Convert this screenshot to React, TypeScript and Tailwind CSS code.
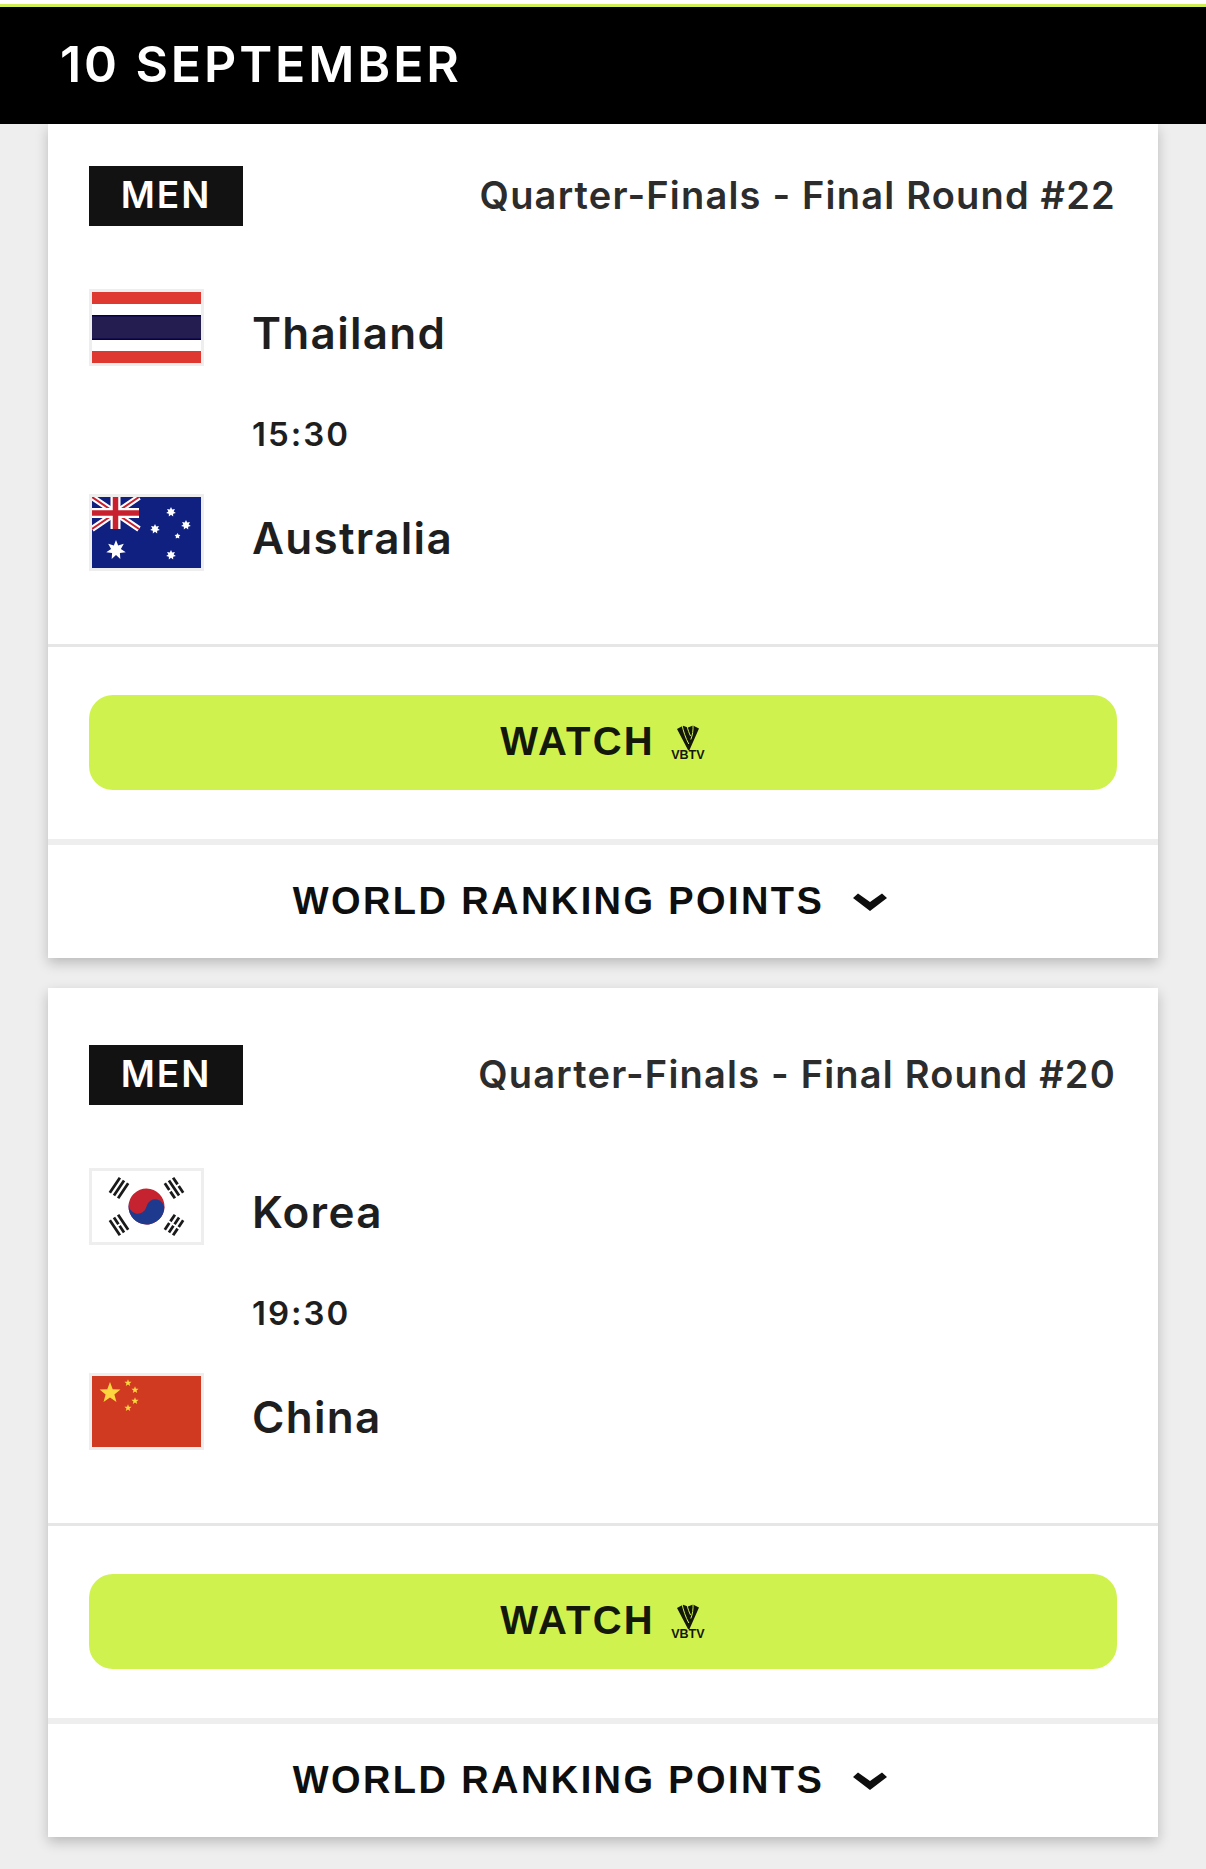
import React from "react";

const FrameFlag = ({ children }: { children: React.ReactNode }) => (
  <div className="w-[115px] h-[77px] shrink-0 border-[3px] border-[#eeeeee] bg-white">
    <svg viewBox="0 0 109 71" width="109" height="71" className="block">{children}</svg>
  </div>
);

const star = (cx: number, cy: number, r: number, points = 5, inner = 0.42) => {
  const pts: string[] = [];
  for (let i = 0; i < points * 2; i++) {
    const a = -Math.PI / 2 + (i * Math.PI) / points;
    const rr = i % 2 === 0 ? r : r * inner;
    pts.push(`${(cx + rr * Math.cos(a)).toFixed(2)},${(cy + rr * Math.sin(a)).toFixed(2)}`);
  }
  return pts.join(" ");
};

const Thailand = () => (
  <FrameFlag>
    <rect width="109" height="71" fill="#fff" />
    <rect y="0" width="109" height="12" fill="#de3831" />
    <rect y="59" width="109" height="12" fill="#de3831" />
    <rect y="23" width="109" height="25" fill="#241d4f" />
    <rect y="23" width="109" height="1.5" fill="#05004a" />
    <rect y="46.5" width="109" height="1.5" fill="#05004a" />
  </FrameFlag>
);

const Australia = () => (
  <FrameFlag>
    <rect width="109" height="71" fill="#0f2080" />
    <path d="M0 0L47 32M47 0L0 32" stroke="#fff" strokeWidth="6" />
    <path d="M0 0L47 32M47 0L0 32" stroke="#c8202f" strokeWidth="2" />
    <path d="M23.5 0V32M0 16H47" stroke="#fff" strokeWidth="10" />
    <path d="M23.5 0V32M0 16H47" stroke="#c8202f" strokeWidth="5.5" />
    <polygon points={star(24, 53, 10, 7, 0.5)} fill="#fff" />
    <polygon points={star(79, 15, 5, 7, 0.55)} fill="#fff" />
    <polygon points={star(63, 32, 5, 7, 0.55)} fill="#fff" />
    <polygon points={star(94, 28, 5, 7, 0.55)} fill="#fff" />
    <polygon points={star(85.5, 39, 3, 5, 0.55)} fill="#fff" />
    <polygon points={star(79, 58, 5, 7, 0.55)} fill="#fff" />
  </FrameFlag>
);

const Korea = () => (
  <FrameFlag>
    <rect width="109" height="71" fill="#fff" />
    <g stroke="#1a1a1a" strokeWidth="2.8" fill="none">
      <g transform="translate(27 17) rotate(-56)">
        <path d="M-9 -5H9M-9 0H9M-9 5H9" />
      </g>
      <g transform="translate(82 17) rotate(56)">
        <path d="M-9 -5H-1M1 -5H9M-9 0H9M-9 5H-1M1 5H9" />
      </g>
      <g transform="translate(27 54) rotate(56)">
        <path d="M-9 -5H9M-9 0H-1M1 0H9M-9 5H9" />
      </g>
      <g transform="translate(82 54) rotate(-56)">
        <path d="M-9 -5H-1M1 -5H9M-9 0H-1M1 0H9M-9 5H-1M1 5H9" />
      </g>
    </g>
    <g transform="rotate(12 54.5 35.5)">
      <circle cx="54.5" cy="35.5" r="18" fill="#c5232f" />
      <path d="M36.5 35.5A18 18 0 0 0 72.5 35.5A9 9 0 0 0 54.5 35.5A9 9 0 0 1 36.5 35.5Z" fill="#1d3a8f" />
    </g>
  </FrameFlag>
);

const China = () => (
  <FrameFlag>
    <rect width="109" height="71" fill="#cf3a20" />
    <polygon points={star(18, 17, 11)} fill="#fcd53f" />
    <polygon points={star(36, 7, 3.8)} fill="#fcd53f" />
    <polygon points={star(43, 14, 3.8)} fill="#fcd53f" />
    <polygon points={star(43, 25, 3.8)} fill="#fcd53f" />
    <polygon points={star(36, 32, 3.8)} fill="#fcd53f" />
  </FrameFlag>
);

const Vbtv = () => (
  <div className="flex flex-col items-center w-[36px] ml-[15px]">
    <svg viewBox="0 0 22 25" width="24" height="25" className="block">
      <path d="M0 4L6 0.8L11 2.5L16 0.5L22 3.5L12.5 25L11 25Z" fill="#14180a" />
      <path d="M5 0C6.5 6.5 8.5 13 11.8 19" fill="none" stroke="#cff24f" strokeWidth="1" />
      <path d="M10 1C11 5 12.2 8.5 13.6 11" fill="none" stroke="#cff24f" strokeWidth="1" />
      <path d="M16 0C16.3 5 15.6 10 13.8 14.5" fill="none" stroke="#cff24f" strokeWidth="1" />
    </svg>
    <span className="text-[12.5px] leading-[11px] font-bold text-[#14180a] font-['Liberation_Sans',sans-serif]">VBTV</span>
  </div>
);

const Chevron = () => (
  <svg viewBox="0 0 34 21" width="34" height="21" className="block ml-[29px] mt-[3px]">
    <polygon points="0,6 5,1.5 17,10 29,1.5 34,6 17,19" fill="#0e0e0e" />
  </svg>
);

type CardProps = {
  first?: boolean;
  round: string;
  time: string;
  teamA: string;
  teamB: string;
  flagA: React.ReactNode;
  flagB: React.ReactNode;
};

const Team = ({ flag, name }: { flag: React.ReactNode; name: string }) => (
  <div className="flex items-center gap-[48px]">
    {flag}
    <span className="text-[44px] leading-[52px] pt-[10px] font-semibold tracking-[1.3px] text-[#1e1e1e]">{name}</span>
  </div>
);

const Card = ({ first, round, time, teamA, teamB, flagA, flagB }: CardProps) => (
  <section className="bg-white shadow-[0_5px_12px_rgba(0,0,0,0.22)]">
    <div className={first ? "px-[41px] pt-[42px]" : "px-[41px] pt-[57px]"}>
      <div className="flex items-center justify-between h-[60px]">
        <span className="w-[154px] h-[60px] bg-[#121212] text-white flex items-center justify-center text-[37px] font-semibold tracking-[2px] pb-[2px]">MEN</span>
        <span className="text-[38px] font-semibold tracking-[1.2px] text-[#2c2c2c] pr-[1px] pb-[2px]">{round}</span>
      </div>
      <div className="mt-[63px]">
        <Team flag={flagA} name={teamA} />
        <div className="h-[128px] flex items-center pl-[163px] pt-[9px] text-[33px] font-semibold tracking-[2px] text-[#1e1e1e]">{time}</div>
        <Team flag={flagB} name={teamB} />
      </div>
    </div>
    <div className="mt-[73px] h-[3px] bg-[#e6e6e6]" />
    <div className="px-[41px] pt-[48px] pb-[49px]">
      <div className="h-[95px] rounded-[24px] bg-[#cff24f] flex items-center justify-center">
        <span className="text-[40px] font-bold tracking-[2.2px] text-[#14180a] font-['Liberation_Sans',sans-serif] pb-[3px]">WATCH</span>
        <Vbtv />
      </div>
    </div>
    <div className="h-[6px] bg-[#eeeeee]" />
    <div className="h-[113px] flex items-center justify-center pr-[26px] pb-[1px]">
      <span className="text-[38px] font-bold tracking-[2.4px] text-[#0e0e0e] font-['Liberation_Sans',sans-serif]">WORLD RANKING POINTS</span>
      <Chevron />
    </div>
  </section>
);

export default function App() {
  return (
    <div className="w-[1206px] h-[1869px] bg-[#eeeeee] overflow-hidden font-['Inter',sans-serif]">
      <div className="h-[4px] bg-white" />
      <div className="h-[3px] bg-[#cfee55]" />
      <header className="h-[117px] bg-black flex items-center pl-[60px] pb-[2px] relative z-10">
        <h1 className="text-[50px] font-semibold tracking-[2.9px] text-white">10 SEPTEMBER</h1>
      </header>
      <main className="px-[48px] flex flex-col gap-[30px]">
        <Card first round="Quarter-Finals - Final Round #22" time="15:30" teamA="Thailand" teamB="Australia" flagA={<Thailand />} flagB={<Australia />} />
        <Card round="Quarter-Finals - Final Round #20" time="19:30" teamA="Korea" teamB="China" flagA={<Korea />} flagB={<China />} />
      </main>
    </div>
  );
}
